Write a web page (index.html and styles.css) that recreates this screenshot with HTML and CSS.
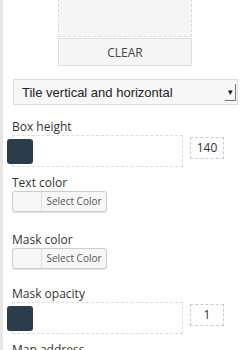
FILE: index.html
```html
<!DOCTYPE html>
<html>
    <head>
        <meta charset = utf-8>
        <title>Widget settings</title>
        <link rel="stylesheet" href="styles.css">
    </head>

    <body>
        <div class = panel>
            <div class = image>
                <div class = preview></div>
                <button class = clear>CLEAR</button>
            </div>

            <div class = select>
                <span>Tile vertical and horizontal</span>
                <span class = arrow>&#9662;</span>
            </div>

            <div class = "field first">
                <div class = label>Box height</div>
                <div class = range>
                    <div class = track><span class = knob></span></div>
                    <div class = value>140</div>
                </div>
            </div>

            <div class = "field near">
                <div class = label>Text color</div>
                <div class = color><span class = swatch></span><span class = pick>Select Color</span></div>
            </div>

            <div class = "field far">
                <div class = label>Mask color</div>
                <div class = color><span class = swatch></span><span class = pick>Select Color</span></div>
            </div>

            <div class = "field far2">
                <div class = label>Mask opacity</div>
                <div class = range>
                    <div class = track><span class = knob></span></div>
                    <div class = value>1</div>
                </div>
            </div>

            <div class = "field near">
                <div class = label>Map address</div>
            </div>
        </div>
    </body>
</html>
```

FILE: styles.css
```css
html {
    background: #fff;
    font-family: "Open Sans", sans-serif;
}

body {
    margin: 0;
    color: #333;
}

.panel {
    width: 243px;
    height: 350px;
    border-left: 3px solid #e6e6e6;
    border-right: 4px solid #e6e6e6;
    padding-left: 9px;
    overflow: hidden;
    box-sizing: content-box
}

.image {
    margin-left: 46px;
    width: 134px
}

.preview {
    height: 38px;
    margin-top: -1px;
    background: #f5f5f5;
    border: 1px dashed #ddd;
    border-top: none;
    box-sizing: border-box
}

.clear {
    display: block;
    width: 134px;
    height: 28px;
    margin-top: 1px;
    padding: 0;
    background: #f5f5f5;
    border: 1px solid #ddd;
    font-family: inherit;
    font-size: 12px;
    color: #444
}

.select {
    display: flex;
    justify-content: space-between;
    align-items: center;
    width: 225px;
    height: 26px;
    margin: 13px 0 0 1px;
    padding-left: 8px;
    box-sizing: border-box;
    background: #f7f7f7;
    border: 1px solid #ddd;
    font-family: "Liberation Sans", sans-serif;
    font-size: 13px;
    color: #222
}

.arrow {
    width: 10px;
    height: 16px;
    margin-right: 1px;
    font-size: 9px;
    line-height: 16px;
    text-align: center;
    color: #111;
    border-right: 1px solid #777;
    border-bottom: 1px solid #777
}

.label {
    font-size: 12px;
    line-height: 15px;
    color: #333
}

.field.first {margin-top: 14px}
.field.near {margin-top: 8px}
.field.far {margin-top: 20px}
.field.far2 {margin-top: 17px}

.range {
    display: flex;
    align-items: flex-start;
    gap: 7px;
    margin-top: 1px
}

.track {
    display: flex;
    align-items: center;
    width: 171px;
    height: 32px;
    border: 1px dashed #ddd;
    box-sizing: border-box
}

.knob {
    width: 26px;
    height: 25px;
    margin-left: -6px;
    background: #2b3d4b;
    border-radius: 3px
}

.value {
    width: 34px;
    height: 22px;
    margin-top: 2px;
    border: 1px dashed #ccc;
    box-sizing: border-box;
    font-size: 12px;
    line-height: 20px;
    text-align: center;
    color: #333
}

.color {
    display: flex;
    width: 95px;
    height: 21px;
    margin-top: 1px;
    border: 1px solid #ccc;
    border-radius: 3px;
    box-sizing: border-box;
    background: #f7f7f7;
    box-shadow: 0 1px 0 #e5e5e5
}

.swatch {
    width: 28px;
    border-right: 1px solid #ddd
}

.pick {
    flex: 1;
    font-size: 10px;
    line-height: 19px;
    text-align: center;
    color: #555
}
```
